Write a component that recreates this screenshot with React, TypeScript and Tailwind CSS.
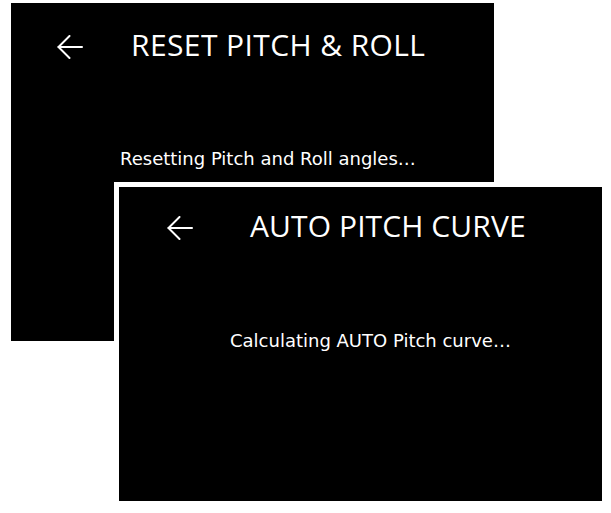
const BackArrow = () => (
  <svg width="26" height="24" viewBox="0 0 26 24" fill="none" stroke="white" strokeWidth="2" strokeLinecap="round" strokeLinejoin="round">
    <path d="M1.5 12H25" />
    <path d="M12.5 1L1.5 12L12.5 23" />
  </svg>
);

const App = () => {
  return (
    <div className="min-h-screen bg-white">
      {/* Reset pitch & roll screen */}
      <div className="pl-[11px] pt-[3px]">
        <div className="w-[483px] h-[338px] bg-black text-white">
          <div className="h-[88px] flex items-center pl-[46px]">
            <BackArrow />
            <span className="ml-[48px] mb-[4px] text-[30px] leading-none tracking-[0.4px] font-['Open_Sans',sans-serif]">RESET PITCH &amp; ROLL</span>
          </div>
          <p className="mt-[59px] pl-[109px] text-[18px] leading-none font-['DejaVu_Sans',sans-serif]">Resetting Pitch and Roll angles…</p>
        </div>
      </div>

      {/* Auto pitch curve screen */}
      <div className="ml-[114px] -mt-[159px] relative w-[493px] h-[324px] border-[5px] border-white bg-black text-white">
        <div className="h-[82px] flex items-center pl-[48px]">
          <BackArrow />
          <span className="ml-[57px] mb-[4px] text-[30px] leading-none tracking-[0.1px] font-['Open_Sans',sans-serif]">AUTO PITCH CURVE</span>
        </div>
        <p className="mt-[63px] pl-[111px] text-[18px] leading-none font-['DejaVu_Sans',sans-serif]">Calculating AUTO Pitch curve…</p>
      </div>
    </div>
  );
};

export default App;
